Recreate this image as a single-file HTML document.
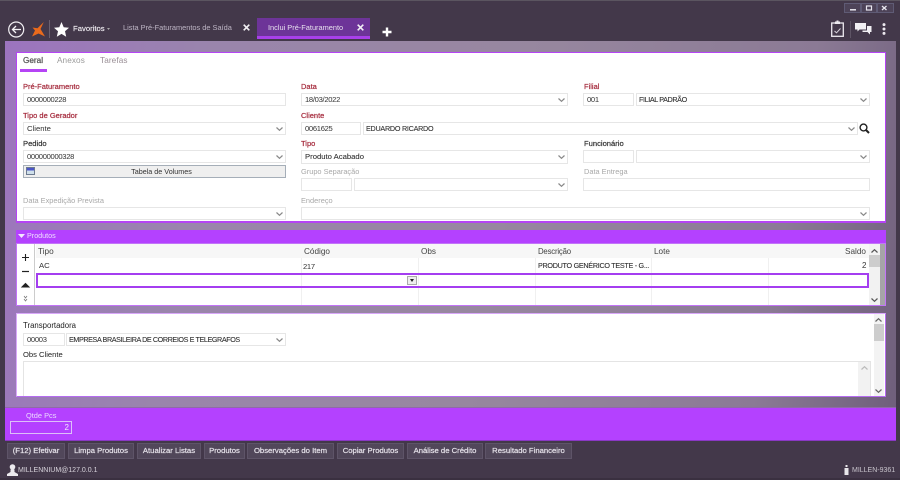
<!DOCTYPE html>
<html lang="pt"><head><meta charset="utf-8"><title>Inclui Pré-Faturamento</title>
<style>
html,body{margin:0;padding:0}
body{width:900px;height:480px;overflow:hidden;position:relative;background:#43384a;font:8px/11px "Liberation Sans",sans-serif;color:#333}
div,span,svg{position:absolute;box-sizing:border-box}
svg{overflow:visible}
.t{white-space:nowrap}
.p{background:#fff;border:1px solid #b544f5}
.i{background:#fff;border:1px solid #e6e6e6;height:13px;white-space:nowrap;padding-left:3px;line-height:12px;color:#333;font-size:7.7px}
.g{font-size:7.600px;letter-spacing:-.3px}
.n{font-size:7.200px;letter-spacing:-.38px;padding-left:2px;-webkit-text-stroke:.1px #333}
.r{color:#a52a3c;font-size:7.500px;-webkit-text-stroke:.2px #a52a3c}
.l{color:#333;font-size:7.600px;-webkit-text-stroke:.2px #333}
.d{color:#a8a8a8;font-size:7.400px}
.c{width:7px;height:4px;fill:none;stroke:#888;stroke-width:1.200}
.b{top:443px;height:16px;background:#51475a;border:1px solid #5e5468;color:#e6e2ea;text-align:center;line-height:14px;font-size:7.700px;white-space:nowrap;-webkit-text-stroke:.2px #e6e2ea}
.h{top:246px;color:#444;font-size:8.200px}
.v{width:1px;background:#f0f0f0}
</style></head><body>
<div style="left:0;top:0;width:900px;height:1px;background:#5b5560"></div>
<div style="left:0;top:478px;width:900px;height:2px;background:#3a3040"></div>

<!-- top bar -->
<svg style="left:8px;top:21px" width="17" height="17" viewBox="0 0 17 17" fill="none" stroke="#f2f0f4"><circle cx="8.200" cy="8.500" r="7.500" stroke-width="1.200"/><path d="M13 8.500H4.500M8 5 4.500 8.500 8 12" stroke-width="1.300"/></svg>
<svg style="left:31px;top:22px" width="14" height="15" viewBox="0 0 14 15"><path d="M12.800 0 9.500 7 14 14.500 7.500 11.500 1 14.500 4 8.500 1.500 5.500 6.500 6.300Z" fill="#ea6a1c"/></svg>
<div style="left:49px;top:20px;width:1px;height:18px;background:#6b6170"></div>
<svg style="left:54px;top:22px" width="15" height="15" viewBox="0 0 15 15"><path d="M7.500 0 9.700 5.200 15 5.700 11 9.300 12.200 14.800 7.500 11.900 2.800 14.800 4 9.300 0 5.700 5.300 5.200Z" fill="#fff"/></svg>
<span class="t" style="left:73px;top:23px;color:#f0edf2;font-size:7.700px;-webkit-text-stroke:.15px #f0edf2">Favoritos</span>
<svg style="left:107px;top:28px" width="3" height="2" viewBox="0 0 3 2"><path d="M0 0H3L1.500 2Z" fill="#aaa"/></svg>
<span class="t" style="left:123px;top:22px;color:#bdb5c4;font-size:7.400px">Lista Pré-Faturamentos de Saída</span>
<svg style="left:243px;top:24px" width="7" height="7" viewBox="0 0 7 7"><path d="M.7.700 6.300 6.300M6.300.700.700 6.300" stroke="#f2f0f4" stroke-width="1.600"/></svg>
<div style="left:257px;top:18px;width:113px;height:21px;background:#6d3498;border-bottom:3px solid #a840ea"></div>
<span class="t" style="left:268px;top:22px;color:#e8e2ee;font-size:7.400px">Inclui Pré-Faturamento</span>
<svg style="left:357px;top:24px" width="7" height="7" viewBox="0 0 7 7"><path d="M.7.700 6.300 6.300M6.300.700.700 6.300" stroke="#f2f0f4" stroke-width="1.600"/></svg>
<svg style="left:382px;top:27px" width="10" height="10" viewBox="0 0 10 10"><path d="M5 .5V9.500M.5 5H9.500" stroke="#fff" stroke-width="2.400"/></svg>

<!-- window buttons -->
<div style="left:844px;top:3px;width:17px;height:10px;background:#4d4358;border:1px solid #5f5b75"></div>
<div style="left:861px;top:3px;width:16px;height:10px;background:#4d4358;border:1px solid #5f5b75"></div>
<div style="left:877px;top:3px;width:17px;height:10px;background:#4d4358;border:1px solid #5f5b75"></div>
<svg style="left:849px;top:5px" width="40" height="6" viewBox="0 0 40 6" fill="none" stroke="#e8e6ee"><path d="M1 4.800H7" stroke-width="1.500"/><rect x="17.500" y="1" width="5" height="4" stroke-width="1.200"/><path d="M33 1 37.500 5M37.500 1 33 5" stroke-width="1.300"/></svg>

<!-- right icons -->
<svg style="left:831px;top:20px" width="13" height="17" viewBox="0 0 13 17" fill="none"><rect x=".7" y="3" width="11.600" height="13.300" stroke="#ece9ef" stroke-width="1.300"/><path d="M4 3V1.500H5.500V.5H7.500V1.500H9V4H4Z" fill="#ece9ef"/><path d="M3.500 11 5.500 12.800 9.500 8.500" stroke="#d5d0da"/></svg>
<div style="left:850px;top:21px;width:1px;height:17px;background:#5e5465"></div>
<svg style="left:855px;top:23px" width="17" height="12" viewBox="0 0 17 12" fill="#f2f0f4"><path d="M0 0H11V6.500H4.500L2.500 8.500V6.500H0Z"/><path d="M12 3H16.500V9H15V11.500L12.500 9H7.500V7.500H12Z"/></svg>
<svg style="left:882px;top:23px" width="4" height="12" viewBox="0 0 4 12" fill="#ece9ef"><circle cx="2" cy="1.600" r="1.500"/><circle cx="2" cy="6" r="1.500"/><circle cx="2" cy="10.400" r="1.500"/></svg>

<!-- content bg -->
<div style="left:5px;top:41px;width:891px;height:367px;background:linear-gradient(100deg,#9c74bf 0,#9a85ac 22%,#97879f 55%,#8b7a95 85%,#6f5f7b 100%)"></div>

<!-- panel 1 -->
<div class="p" style="left:16px;top:52px;width:870px;height:171px;border-bottom-width:2px"></div>
<span class="t" style="left:23px;top:55px;color:#555;font-size:8.200px;-webkit-text-stroke:.25px #555">Geral</span>
<span class="t" style="left:57px;top:55px;color:#9a9a9a;font-size:8.200px;letter-spacing:.1px">Anexos</span>
<span class="t" style="left:100px;top:55px;color:#9a8f96;font-size:8.200px;letter-spacing:.1px">Tarefas</span>
<div style="left:20px;top:69px;width:27px;height:3px;background:#b544f5"></div>

<span class="t r" style="left:23px;top:81px">Pré-Faturamento</span>
<div class="i g" style="left:23px;top:93px;width:263px">0000000228</div>
<span class="t r" style="left:301px;top:81px">Data</span>
<div class="i g" style="left:301px;top:93px;width:267px">18/03/2022</div>
<svg class="c" style="left:558px;top:98px" viewBox="0 0 7 4"><path d="M.5.500 3.500 3.300 6.500.500"/></svg>
<span class="t r" style="left:584px;top:81px">Filial</span>
<div class="i g" style="left:583px;top:93px;width:51px">001</div>
<div class="i n" style="left:636px;top:93px;width:234px">FILIAL PADRÃO</div>
<svg class="c" style="left:860px;top:98px" viewBox="0 0 7 4"><path d="M.5.500 3.500 3.300 6.500.500"/></svg>

<span class="t r" style="left:23px;top:110px">Tipo de Gerador</span>
<div class="i" style="left:23px;top:122px;width:263px">Cliente</div>
<svg class="c" style="left:276px;top:127px" viewBox="0 0 7 4"><path d="M.5.500 3.500 3.300 6.500.500"/></svg>
<span class="t r" style="left:301px;top:110px">Cliente</span>
<div class="i g" style="left:301px;top:122px;width:60px">0061625</div>
<div class="i n" style="left:363px;top:122px;width:495px;letter-spacing:-.25px">EDUARDO RICARDO</div>
<svg class="c" style="left:848px;top:127px" viewBox="0 0 7 4"><path d="M.5.500 3.500 3.300 6.500.500"/></svg>
<svg style="left:859px;top:123px" width="11" height="11" viewBox="0 0 11 11" fill="none" stroke="#222"><circle cx="4.500" cy="4.500" r="3.400" stroke-width="1.400"/><path d="M7 7 10 10" stroke-width="2"/></svg>

<span class="t l" style="left:23px;top:138px">Pedido</span>
<div class="i g" style="left:23px;top:150px;width:263px">000000000328</div>
<svg class="c" style="left:276px;top:155px" viewBox="0 0 7 4"><path d="M.5.500 3.500 3.300 6.500.500"/></svg>
<span class="t r" style="left:301px;top:138px">Tipo</span>
<div class="i" style="left:301px;top:150px;width:267px;height:14px;-webkit-text-stroke:.1px #333">Produto Acabado</div>
<svg class="c" style="left:558px;top:155px" viewBox="0 0 7 4"><path d="M.5.500 3.500 3.300 6.500.500"/></svg>
<span class="t l" style="left:584px;top:138px">Funcionário</span>
<div class="i" style="left:583px;top:150px;width:51px"></div>
<div class="i" style="left:636px;top:150px;width:234px"></div>
<svg class="c" style="left:860px;top:155px" viewBox="0 0 7 4"><path d="M.5.500 3.500 3.300 6.500.500"/></svg>

<div class="t" style="left:23px;top:165px;width:263px;height:13px;background:#efefef;border:1px solid #a5aeb8;text-align:center;line-height:11px;color:#333;font-size:7.200px;padding-left:14px">Tabela de Volumes</div>
<div style="left:26px;top:167px;width:9px;height:8px;background:linear-gradient(#4b55c8 0 40%,#cfe0ea 40% 100%);border:1px solid #6d7a90"></div>

<span class="t d" style="left:301px;top:166px">Grupo Separação</span>
<div class="i" style="left:301px;top:178px;width:51px"></div>
<div class="i" style="left:354px;top:178px;width:214px"></div>
<svg class="c" style="left:558px;top:183px" viewBox="0 0 7 4"><path d="M.5.500 3.500 3.300 6.500.500"/></svg>
<span class="t d" style="left:584px;top:166px">Data Entrega</span>
<div class="i" style="left:583px;top:178px;width:287px"></div>

<span class="t d" style="left:23px;top:195px">Data Expedição Prevista</span>
<div class="i" style="left:23px;top:207px;width:263px"></div>
<svg class="c" style="left:276px;top:212px" viewBox="0 0 7 4"><path d="M.5.500 3.500 3.300 6.500.500"/></svg>
<span class="t d" style="left:301px;top:195px">Endereço</span>
<div class="i" style="left:301px;top:207px;width:569px"></div>
<svg class="c" style="left:860px;top:212px" viewBox="0 0 7 4"><path d="M.5.500 3.500 3.300 6.500.500"/></svg>

<!-- produtos -->
<div style="left:16px;top:230px;width:870px;height:14px;background:#b441ff"></div>
<svg style="left:18px;top:234px" width="7" height="4" viewBox="0 0 7 4"><path d="M0 0H7L3.500 4Z" fill="#f3e6ff"/></svg>
<span class="t" style="left:27px;top:230px;color:#efdfff;font-size:7.200px">Produtos</span>
<div class="p" style="left:16px;top:243px;width:870px;height:63px;border-color:#c274f8"></div>
<div style="left:17px;top:244px;width:18px;height:61px;background:#fff;border-right:1px solid #ccc"></div>
<div style="left:36px;top:244px;width:833px;height:14px;background:#f7f7f7"></div>
<div style="left:869px;top:244px;width:11px;height:61px;background:#f2f2f2"></div>
<div style="left:869px;top:255px;width:11px;height:12px;background:#cdcdcd"></div>
<div style="left:880px;top:244px;width:5px;height:61px;background:#a6a4a8"></div>
<svg style="left:871px;top:249px" width="7" height="4" viewBox="0 0 7 4" fill="none" stroke="#555" stroke-width="1.200"><path d="M.5 3.500 3.500.700 6.500 3.500"/></svg>
<svg style="left:871px;top:298px" width="7" height="4" viewBox="0 0 7 4" fill="none" stroke="#555" stroke-width="1.200"><path d="M.5.500 3.500 3.300 6.500.500"/></svg>
<div class="v" style="left:301px;top:258px;height:47px"></div>
<div class="v" style="left:418px;top:258px;height:47px"></div>
<div class="v" style="left:535px;top:258px;height:47px"></div>
<div class="v" style="left:651px;top:258px;height:47px"></div>
<div class="v" style="left:768px;top:258px;height:47px"></div>
<span class="t h" style="left:38px">Tipo</span>
<span class="t h" style="left:304px">Código</span>
<span class="t h" style="left:421px">Obs</span>
<span class="t h" style="left:538px;font-size:7.800px;letter-spacing:-.2px">Descrição</span>
<span class="t h" style="left:654px">Lote</span>
<span class="t h" style="right:34px">Saldo</span>
<span class="t" style="left:39px;top:260px;color:#333;font-size:7.700px">AC</span>
<span class="t" style="left:303px;top:261px;color:#333;font-size:7.600px;letter-spacing:-.3px">217</span>
<span class="t" style="left:538px;top:260px;color:#333;font-size:7.200px;letter-spacing:-.28px;-webkit-text-stroke:.1px #333">PRODUTO GENÉRICO TESTE - G...</span>
<span class="t" style="left:862px;top:260px;color:#333">2</span>
<div style="left:36px;top:273px;width:833px;height:15px;border:2px solid #a43ef0"></div>
<div style="left:407px;top:276px;width:10px;height:9px;background:#eee;border:1px solid #aaa"></div>
<svg style="left:410px;top:279px" width="4" height="3" viewBox="0 0 4 3"><path d="M0 0H4L2 3Z" fill="#222"/></svg>
<svg style="left:21px;top:253px" width="9" height="50" viewBox="0 0 9 50" fill="none" stroke="#222"><path d="M4.500 1V8M1 4.500H8" stroke-width="1.100"/><path d="M1 18.500H8" stroke-width="1.200"/><path d="M1 34 4.500 30.500 8 34Z" fill="#222"/><path d="M3 43 4.500 45 6 43M3 46 4.500 48 6 46" stroke="#777" stroke-width=".8"/></svg>

<!-- panel 3 -->
<div class="p" style="left:16px;top:313px;width:870px;height:84px;border-color:#d9a8fa;border-bottom-color:#b56cf0;border-right-color:#b56cf0"></div>
<div style="left:874px;top:314px;width:10px;height:82px;background:#f3f3f3"></div>
<div style="left:874px;top:324px;width:10px;height:17px;background:#cdcdcd"></div>
<svg style="left:875px;top:318px" width="7" height="4" viewBox="0 0 7 4" fill="none" stroke="#666" stroke-width="1.200"><path d="M.5 3.500 3.500.700 6.500 3.500"/></svg>
<svg style="left:875px;top:389px" width="7" height="4" viewBox="0 0 7 4" fill="none" stroke="#666" stroke-width="1.200"><path d="M.5.500 3.500 3.300 6.500.500"/></svg>
<span class="t" style="left:23px;top:320px;color:#222;font-size:7.800px">Transportadora</span>
<div class="i g" style="left:23px;top:333px;width:42px;line-height:11px">00003</div>
<div class="i n" style="left:66px;top:333px;width:220px;line-height:11px;letter-spacing:-.4px">EMPRESA BRASILEIRA DE CORREIOS E TELEGRAFOS</div>
<svg class="c" style="left:276px;top:338px" viewBox="0 0 7 4"><path d="M.5.500 3.500 3.300 6.500.500"/></svg>
<span class="t" style="left:23px;top:349px;color:#222;font-size:7.600px">Obs Cliente</span>
<div style="left:23px;top:361px;width:848px;height:35px;border:1px solid #e4e4e4;border-bottom:0;background:#fff"></div>
<div style="left:858px;top:362px;width:12px;height:34px;background:#f2f2f2"></div>
<svg style="left:861px;top:366px" width="7" height="4" viewBox="0 0 7 4" fill="none" stroke="#bbb" stroke-width="1.200"><path d="M.5 3.500 3.500.700 6.500 3.500"/></svg>

<!-- purple bar -->
<div style="left:5px;top:407px;width:891px;height:34px;background:#b441ff;border-top:1px solid #8f6aa8;border-bottom:1px solid #8a38c4"></div>
<span class="t" style="left:26px;top:410px;color:#ecd9ff;font-size:7.400px">Qtde Pcs</span>
<div style="left:10px;top:421px;width:62px;height:13px;border:1px solid #dcc0f8;color:#f3e6ff;text-align:right;padding-right:2px;line-height:11px">2</div>

<!-- buttons -->
<div class="b" style="left:7px;width:58px">(F12) Efetivar</div>
<div class="b" style="left:68px;width:66px">Limpa Produtos</div>
<div class="b" style="left:137px;width:64px">Atualizar Listas</div>
<div class="b" style="left:204px;width:41px">Produtos</div>
<div class="b" style="left:247px;width:87px">Observações do Item</div>
<div class="b" style="left:337px;width:67px">Copiar Produtos</div>
<div class="b" style="left:407px;width:76px">Análise de Crédito</div>
<div class="b" style="left:485px;width:87px">Resultado Financeiro</div>

<!-- status -->
<svg style="left:7px;top:464px" width="11" height="12" viewBox="0 0 11 12" fill="#eceaee"><circle cx="5.500" cy="3" r="2.800"/><path d="M3.500 5.500H7.500V8L11 10V12H0V10L3.500 8Z"/></svg>
<span class="t" style="left:18px;top:465px;color:#d8d4dc;font-size:7px">MILLENNIUM@127.0.0.1</span>
<svg style="left:844px;top:465px" width="5" height="10" viewBox="0 0 5 10" fill="#e8e6ea"><rect x="1.500" width="2" height="2"/><rect x=".5" y="3" width="4" height="7"/></svg>
<span class="t" style="left:852px;top:465px;color:#c8c4cc;font-size:7px">MILLEN-9361</span>
</body></html>
